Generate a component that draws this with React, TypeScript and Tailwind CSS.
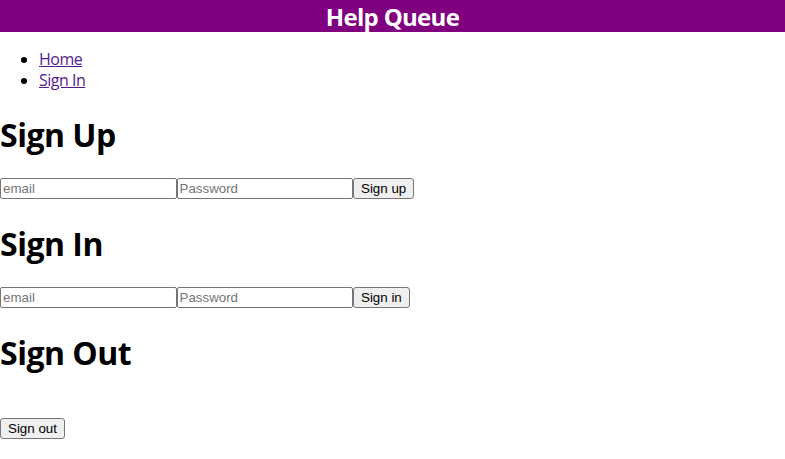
export default function App() {
  const inputCls =
    "w-[176.5px] h-[21px] border border-[#767676] rounded-[2px] px-[2px] text-[13.33px] text-black placeholder:text-[#757575] font-['Liberation_Sans',Arial,sans-serif] outline-none";
  const btnCls =
    "h-[21px] px-[7px] bg-[#efefef] border border-[#767676] rounded-[3px] text-[13.33px] leading-[19px] text-black font-['Liberation_Sans',Arial,sans-serif]";
  return (
    <div className="bg-white text-black min-h-[459px] font-['Open_Sans',sans-serif]">
      <div className="h-8 bg-[#800080] text-white text-center text-[24px] font-bold leading-8 tracking-[-0.7px] pt-[1px]">Help Queue</div>
      <ul className="list-disc pl-[39px] mt-[17px] mb-[-1px] text-[16px] leading-[21px] tracking-[-0.5px]">
        <li><a href="#" className="text-[#551a8b] underline">Home</a></li>
        <li><a href="#" className="text-[#551a8b] underline">Sign In</a></li>
      </ul>
      <h1 className="mt-[21px] pt-[2px] text-[32px] font-bold leading-[43px] tracking-[-0.5px]">Sign Up</h1>
      <div className="mt-[19px] h-[24px] pt-[3px] flex items-start">
        <input placeholder="email" className={inputCls} />
        <input placeholder="Password" className={inputCls} />
        <button className={btnCls}>Sign up</button>
      </div>
      <h1 className="mt-[21px] pt-[2px] text-[32px] font-bold leading-[43px] tracking-[-0.5px]">Sign In</h1>
      <div className="mt-[19px] h-[24px] pt-[3px] flex items-start">
        <input placeholder="email" className={inputCls} />
        <input placeholder="Password" className={inputCls} />
        <button className={btnCls}>Sign in</button>
      </div>
      <h1 className="mt-[21px] pt-[2px] text-[32px] font-bold leading-[43px] tracking-[-0.5px]">Sign Out</h1>
      <div className="mt-[19px] h-[21px]" />
      <div className="pt-[4px] flex">
        <button className={btnCls}>Sign out</button>
      </div>
    </div>
  );
}
